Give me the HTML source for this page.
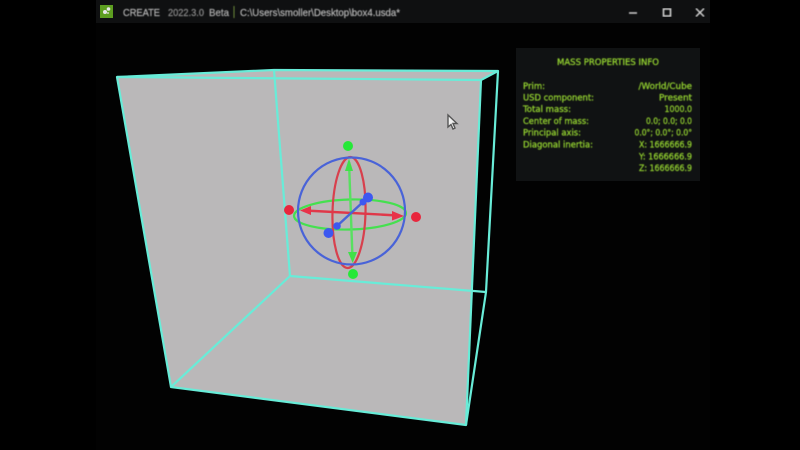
<!DOCTYPE html>
<html><head><meta charset="utf-8"><style>
html,body{margin:0;padding:0;background:#000;width:800px;height:450px;overflow:hidden}
svg{position:absolute;left:0;top:0;display:block}
</style></head><body>
<svg width="800" height="450" viewBox="0 0 800 450" xmlns="http://www.w3.org/2000/svg">
<defs>
<filter id="b" x="-5%" y="-5%" width="110%" height="110%"><feGaussianBlur stdDeviation="0.35"/></filter>
<filter id="c" x="-5%" y="-5%" width="110%" height="110%"><feGaussianBlur stdDeviation="0.4"/></filter>
</defs>
<rect width="800" height="450" fill="#000"/>
<rect x="96" y="0" width="614" height="450" fill="#020202"/>
<rect x="96" y="0" width="614" height="23" fill="#0f1011"/>
<!-- logo -->
<rect x="100" y="5" width="13" height="13" fill="#5d9e20"/>
<circle cx="105" cy="12" r="2" fill="#e8e8e8"/>
<circle cx="108.500" cy="9" r="1.800" fill="#e8e8e8"/>
<circle cx="108" cy="13" r="1" fill="#cfd8c0"/>
<g filter="url(#c)" font-family="'Liberation Sans',sans-serif" font-size="10.500" stroke-width="0.2">
<text x="123" y="16" fill="#b8b8b8" stroke="#b8b8b8" textLength="37" lengthAdjust="spacingAndGlyphs">CREATE</text>
<text x="168" y="16" fill="#909090" stroke="#909090" textLength="36" lengthAdjust="spacingAndGlyphs">2022.3.0</text>
<text x="209" y="16" fill="#b0b0b0" stroke="#b0b0b0" textLength="20" lengthAdjust="spacingAndGlyphs">Beta</text>
<rect x="233.500" y="6" width="1" height="12" fill="#6d8a3a"/>
<text x="240" y="16" fill="#b8b8b8" stroke="#b8b8b8" textLength="160" lengthAdjust="spacingAndGlyphs">C:\Users\smoller\Desktop\box4.usda*</text>
</g>
<!-- window controls -->
<g filter="url(#c)" fill="none" stroke="#d0d0d0">
<path d="M629 13H637" stroke-width="1.500"/>
<rect x="663.500" y="9" width="7" height="7" stroke-width="1.600"/>
<path d="M696 8.500L704 16.500M704 8.500L696 16.500" stroke-width="1.500"/>
</g>
<!-- cube -->
<g filter="url(#b)">
<path d="M117 77L274 70L498 71L481 80L466 425L171 387Z" fill="#bab8b9"/>
<g fill="none" stroke="#68ecd8" stroke-width="2.200" stroke-linejoin="round">
<path d="M117 77L274 70L498 71L486 292L466 425L171 387Z"/>
<path d="M117 77L481 80L498 71"/>
<path d="M481 80L466 425"/>
<path d="M274 70L290 276L486 292"/>
<path d="M290 276L171 387"/>
</g>
<!-- mass gizmo -->
<g fill="none" stroke-width="2.200">
<ellipse cx="350" cy="214.500" rx="56" ry="15" transform="rotate(-1.500 350 214.500)" stroke="#44e050"/>
<ellipse cx="349" cy="212.500" rx="16.500" ry="55.500" transform="rotate(1.500 349 212.500)" stroke="#d8404e"/>
<circle cx="351.500" cy="211" r="53.500" stroke="#4a63d8"/>
<path d="M349 162L352.500 258" stroke="#58e060" stroke-width="2.400"/>
<path d="M305 210.500L398 215.500" stroke="#e03848" stroke-width="2.400"/>
<path d="M337 226L363 202" stroke="#4a63d8" stroke-width="2.400"/>
</g>
<path d="M349 158.500L345 171H353Z" fill="#3fe04a"/>
<path d="M352.700 263L348 252H357Z" fill="#3fe04a"/>
<path d="M300 210.500L311 206V215Z" fill="#e83048"/>
<path d="M404 216L392 211V220.500Z" fill="#e83048"/>
<circle cx="348" cy="146" r="5" fill="#28e838"/>
<circle cx="353" cy="274" r="5" fill="#28e838"/>
<circle cx="289" cy="210" r="5" fill="#e8283c"/>
<circle cx="416" cy="217" r="5" fill="#e8283c"/>
<circle cx="368" cy="197.500" r="5" fill="#3c58f0"/>
<circle cx="328.500" cy="233" r="5" fill="#3c58f0"/>
<circle cx="363" cy="202" r="3.500" fill="#3c58f0"/>
<circle cx="337" cy="226" r="3.800" fill="#3c58f0"/>
<!-- cursor -->
<path d="M448 115V127L451 124.500L453 129L455 128L453 123.500H457Z" fill="#f0f0f0" stroke="#555" stroke-width="1.400"/>
</g>
<!-- panel -->
<rect x="516" y="48" width="184" height="133" fill="#101213"/>
<g filter="url(#c)" font-family="'DejaVu Sans',sans-serif" font-size="9" fill="#92d030" stroke="#92d030" stroke-width="0.3">
<text x="557" y="65" textLength="102" lengthAdjust="spacingAndGlyphs">MASS PROPERTIES INFO</text>
<text x="523" y="89" textLength="22" lengthAdjust="spacingAndGlyphs">Prim:</text>
<text x="523" y="100.500" textLength="71" lengthAdjust="spacingAndGlyphs">USD component:</text>
<text x="523" y="112" textLength="48" lengthAdjust="spacingAndGlyphs">Total mass:</text>
<text x="523" y="124" textLength="66" lengthAdjust="spacingAndGlyphs">Center of mass:</text>
<text x="523" y="135.500" textLength="58" lengthAdjust="spacingAndGlyphs">Principal axis:</text>
<text x="523" y="147.500" textLength="70" lengthAdjust="spacingAndGlyphs">Diagonal inertia:</text>
<text x="638.500" y="89" textLength="53.500" lengthAdjust="spacingAndGlyphs">/World/Cube</text>
<text x="659" y="100.500" textLength="33" lengthAdjust="spacingAndGlyphs">Present</text>
<text x="664.500" y="112" textLength="27.500" lengthAdjust="spacingAndGlyphs">1000.0</text>
<text x="646" y="124" textLength="46" lengthAdjust="spacingAndGlyphs">0.0; 0.0; 0.0</text>
<text x="634.500" y="135.500" textLength="57.500" lengthAdjust="spacingAndGlyphs">0.0°; 0.0°; 0.0°</text>
<text x="639" y="147.500" textLength="53" lengthAdjust="spacingAndGlyphs">X: 1666666.9</text>
<text x="639" y="159.500" textLength="53" lengthAdjust="spacingAndGlyphs">Y: 1666666.9</text>
<text x="639" y="171" textLength="53" lengthAdjust="spacingAndGlyphs">Z: 1666666.9</text>
</g>
</svg>
</body></html>
